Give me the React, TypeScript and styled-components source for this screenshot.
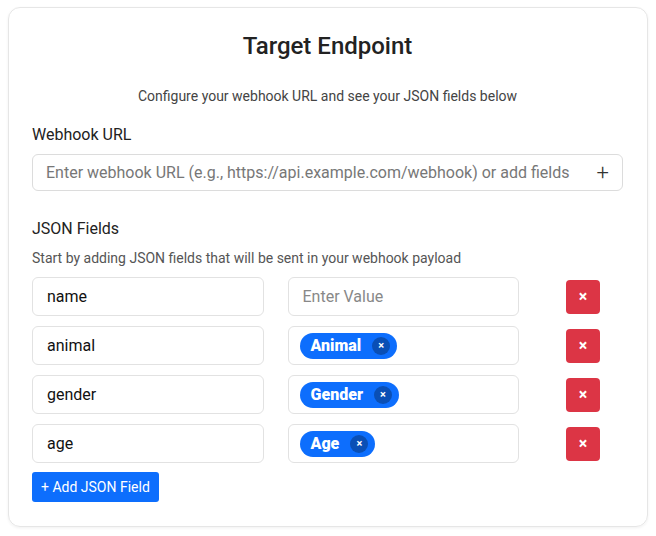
import { FunctionComponent } from 'react';
import styled, { createGlobalStyle } from 'styled-components';

const GlobalStyle = createGlobalStyle`
  body {
    margin: 0;
    background: #ffffff;
    font-family: Roboto, 'Liberation Sans', sans-serif;
    color: #212529;
  }
`;

const Page = styled.div`
  padding: 7px 8px 9px 8px;
`;

const Card = styled.div`
  border: 1px solid #e6e6e6;
  border-radius: 12px;
  box-shadow: 0 1px 3px rgba(0, 0, 0, 0.06);
  padding: 24px 24px 24px 23px;
  min-height: 470px;
`;

const Title = styled.h2`
  margin: 0;
  text-align: center;
  font-size: 24px;
  font-weight: 500;
  color: #222;
`;

const Subtitle = styled.p`
  margin: 28px 0 0;
  text-align: center;
  font-size: 14px;
  color: #444;
`;

const Label = styled.div`
  margin-top: 21px;
  font-size: 16px;
  color: #222;
`;

const UrlBox = styled.div`
  margin-top: 10px;
  height: 37px;
  border: 1px solid #dcdcdc;
  border-radius: 6px;
  display: flex;
  align-items: center;
  padding: 0 13px;
  box-sizing: border-box;
`;

const UrlInput = styled.input`
  flex: 1;
  border: none;
  outline: none;
  font-family: inherit;
  font-size: 16px;
  color: #222;
  background: transparent;
  padding: 0;

  &::placeholder {
    color: #777;
  }
`;

const PlusIcon = styled.span`
  font-size: 22px;
  font-weight: 300;
  color: #333;
  line-height: 1;
`;

const SectionLabel = styled(Label)`
  margin-top: 28px;
`;

const Help = styled.p`
  margin: 12px 0 0;
  font-size: 14px;
  color: #555;
`;

const Rows = styled.div`
  margin-top: 11px;
  display: flex;
  flex-direction: column;
  gap: 10px;
`;

const Row = styled.div`
  display: grid;
  grid-template-columns: 1fr 1fr 80px;
  column-gap: 24px;
  align-items: center;
`;

const Field = styled.div<{ $chip?: boolean }>`
  height: 39px;
  border: 1px solid #e2e2e2;
  border-radius: 6px;
  box-sizing: border-box;
  display: flex;
  align-items: center;
  padding: 0 12px 0 ${({ $chip }) => ($chip ? '11px' : '14px')};
  font-size: 16px;
  color: #111;
`;

const Placeholder = styled.span`
  color: #888;
`;

const Chip = styled.span`
  display: inline-flex;
  align-items: center;
  gap: 11px;
  height: 26px;
  padding: 0 7px 0 11px;
  border-radius: 13px;
  background: #0d6efd;
  color: #fff;
  font-size: 16px;
  font-weight: 900;
`;

const ChipClose = styled.span`
  width: 18px;
  height: 18px;
  border-radius: 50%;
  background: #0a4fb5;
  display: flex;
  align-items: center;
  justify-content: center;
  font-size: 11px;
  font-weight: 700;
`;

const DeleteButton = styled.button`
  justify-self: center;
  width: 34px;
  height: 34px;
  border: none;
  border-radius: 4px;
  background: #dc3545;
  color: #fff;
  font-family: inherit;
  font-size: 16px;
  font-weight: 700;
  padding: 0;
`;

const AddButton = styled.button`
  margin-top: 9px;
  height: 30px;
  padding: 0 9px;
  border: none;
  border-radius: 3px;
  background: #0d6efd;
  color: #fff;
  font-family: inherit;
  font-size: 14px;
`;

const Footer = styled.div`
  display: flex;
`;

type JsonField = { key: string; value?: string };

const fields: JsonField[] = [
  { key: 'name' },
  { key: 'animal', value: 'Animal' },
  { key: 'gender', value: 'Gender' },
  { key: 'age', value: 'Age' },
];

const App: FunctionComponent = () => {
  return (
    <Page>
      <GlobalStyle />
      <Card>
        <Title>Target Endpoint</Title>
        <Subtitle>Configure your webhook URL and see your JSON fields below</Subtitle>
        <Label>Webhook URL</Label>
        <UrlBox>
          <UrlInput placeholder="Enter webhook URL (e.g., https://api.example.com/webhook) or add fields" />
          <PlusIcon>+</PlusIcon>
        </UrlBox>
        <SectionLabel>JSON Fields</SectionLabel>
        <Help>Start by adding JSON fields that will be sent in your webhook payload</Help>
        <Rows>
          {fields.map((item) => (
            <Row key={item.key}>
              <Field>{item.key}</Field>
              <Field $chip={!!item.value}>
                {item.value ? (
                  <Chip>
                    {item.value}
                    <ChipClose>×</ChipClose>
                  </Chip>
                ) : (
                  <Placeholder>Enter Value</Placeholder>
                )}
              </Field>
              <DeleteButton>×</DeleteButton>
            </Row>
          ))}
        </Rows>
        <Footer>
          <AddButton>+ Add JSON Field</AddButton>
        </Footer>
      </Card>
    </Page>
  );
};

export default App;
